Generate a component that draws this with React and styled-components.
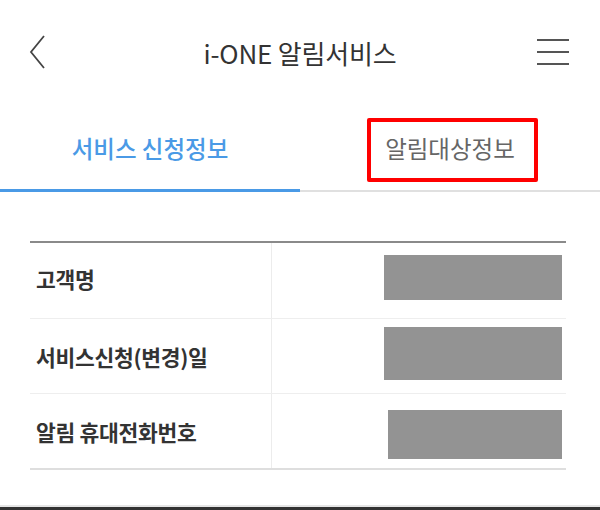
import React from "react";
import styled, { createGlobalStyle } from "styled-components";

const Global = createGlobalStyle`
  html, body { margin: 0; padding: 0; background: #fff; }
  body { font-family: "Noto Sans CJK KR", "Noto Sans", sans-serif; }
  * { box-sizing: border-box; }
`;

const Page = styled.div`
  width: 600px;
  height: 510px;
  display: flex;
  flex-direction: column;
  background: #fff;
  overflow: hidden;
`;

const Header = styled.header`
  height: 104px;
  display: flex;
  align-items: center;
  justify-content: space-between;
  padding: 0 30px 0 28px;
`;

const IconButton = styled.button`
  width: 40px;
  height: 40px;
  border: 0;
  background: none;
  padding: 0;
  display: flex;
  align-items: center;
  justify-content: ${(p) => p.$align || "center"};
`;

const Title = styled.h1`
  margin: 0;
  font-size: 26px;
  font-weight: 400;
  color: #333;
  letter-spacing: -0.2px;
  padding-left: 2px;
`;

const Tabs = styled.nav`
  display: flex;
  height: 88px;
  border-bottom: 2px solid #e0e0e0;
`;

const Tab = styled.div`
  position: relative;
  flex: 1;
  display: flex;
  align-items: center;
  justify-content: center;
  font-size: 23.5px;
  font-weight: ${(p) => (p.$active ? 500 : 400)};
  color: ${(p) => (p.$active ? "#4a9ae6" : "#666")};
  padding-top: 2px;
  &::after {
    content: "";
    position: absolute;
    left: 0;
    right: 0;
    bottom: -2px;
    height: 3px;
    background: ${(p) => (p.$active ? "#4a9ae6" : "transparent")};
  }
`;

const Highlight = styled.span`
  position: absolute;
  left: 67px;
  top: 14px;
  width: 171px;
  height: 64px;
  border: 4px solid #ff0000;
  border-radius: 2px;
`;

const Content = styled.main`
  padding: 49px 34px 0 30px;
  flex: 1;
`;

const Table = styled.div`
  border-top: 2px solid #8a8a8a;
  border-bottom: 2px solid #dedede;
`;

const Row = styled.div`
  display: grid;
  grid-template-columns: 242px 1fr;
  height: 75px;
  & + & {
    border-top: 1px solid #eeeeee;
  }
`;

const Label = styled.div`
  display: flex;
  align-items: center;
  padding-left: 6px;
  padding-bottom: ${(p) => p.$shift || 0}px;
  font-size: 21.5px;
  font-weight: 700;
  color: #333;
  border-right: 1px solid #ececec;
  letter-spacing: -0.3px;
`;

const Value = styled.div`
  display: flex;
  justify-content: flex-end;
  align-items: flex-start;
  padding-right: 4px;
`;

const Masked = styled.div`
  width: ${(p) => p.$w}px;
  height: ${(p) => p.$h}px;
  margin-top: ${(p) => p.$top}px;
  background: #939393;
`;

const BottomBar = styled.div`
  height: 5px;
  border-top: 2px solid #e6e6e6;
  background: #333;
`;

const rows = [
  { label: "고객명", w: 178, h: 45, top: 12, shift: 4 },
  { label: "서비스신청(변경)일", w: 178, h: 53, top: 8, shift: 0 },
  { label: "알림 휴대전화번호", w: 174, h: 49, top: 16, shift: 0 },
];

export default function App() {
  return (
    <>
      <Global />
      <Page>
        <Header>
          <IconButton $align="flex-start" aria-label="뒤로">
            <svg width="20" height="36" viewBox="0 0 20 36">
              <polyline
                points="16,2 3,18 16,34"
                fill="none"
                stroke="#444"
                strokeWidth="1.8"
              />
            </svg>
          </IconButton>
          <Title>i-ONE 알림서비스</Title>
          <IconButton $align="flex-end" aria-label="메뉴">
            <svg width="34" height="28" viewBox="0 0 34 28">
              <g stroke="#555" strokeWidth="2">
                <line x1="1" y1="2" x2="33" y2="2" />
                <line x1="1" y1="14" x2="33" y2="14" />
                <line x1="1" y1="26" x2="33" y2="26" />
              </g>
            </svg>
          </IconButton>
        </Header>
        <Tabs>
          <Tab $active>서비스 신청정보</Tab>
          <Tab>
            알림대상정보
            <Highlight />
          </Tab>
        </Tabs>
        <Content>
          <Table>
            {rows.map((r) => (
              <Row key={r.label}>
                <Label $shift={r.shift}>{r.label}</Label>
                <Value>
                  <Masked $w={r.w} $h={r.h} $top={r.top} />
                </Value>
              </Row>
            ))}
          </Table>
        </Content>
        <BottomBar />
      </Page>
    </>
  );
}
